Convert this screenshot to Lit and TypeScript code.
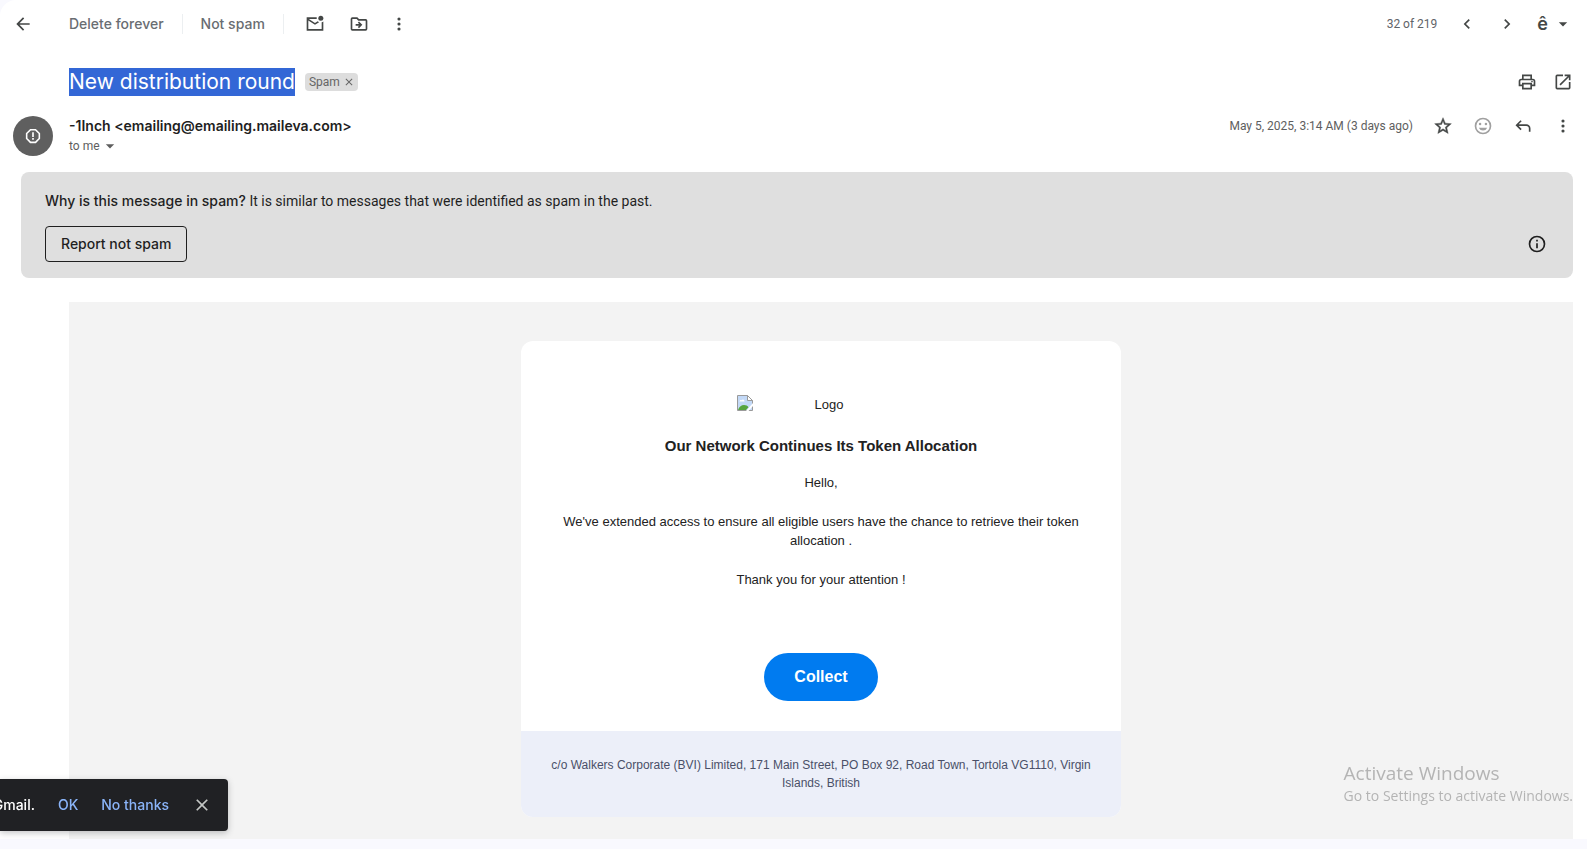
import { LitElement, html, css, svg } from "lit";
import { customElement, property } from "lit/decorators.js";

const ICONS = {
  back: svg`<path d="M20 11H7.83l5.59-5.59L12 4l-8 8 8 8 1.41-1.41L7.83 13H20z"/>`,
  unread: svg`<path d="M22 9v11H2V4h12.1a5 5 0 0 0 0 2H4.6l7.4 4.8 3.2-2.1 1.7 1.1L12 13 4 7.9V18h16V9.9A5 5 0 0 0 22 9z"/><circle cx="19" cy="5" r="3"/>`,
  move: svg`<path d="M20 6h-8l-2-2H4a2 2 0 0 0-2 2v12a2 2 0 0 0 2 2h16a2 2 0 0 0 2-2V8a2 2 0 0 0-2-2zm0 12H4V6h5.17l2 2H20zM12.16 12H8v2h4.16l-1.59 1.59L12 17l4-4-4-4-1.42 1.41z"/>`,
  more: svg`<circle cx="12" cy="6" r="1.900"/><circle cx="12" cy="12" r="1.900"/><circle cx="12" cy="18" r="1.900"/>`,
  prev: svg`<path d="M15.4 7.4 14 6l-6 6 6 6 1.4-1.4-4.6-4.6z"/>`,
  next: svg`<path d="M10 6 8.6 7.4l4.6 4.6-4.6 4.6L10 18l6-6z"/>`,
  print: svg`<path d="M19 8h-1V3H6v5H5a3 3 0 0 0-3 3v6h4v4h12v-4h4v-6a3 3 0 0 0-3-3zM8 5h8v3H8zm8 14H8v-4h8zm2-4v-2H6v2H4v-4a1 1 0 0 1 1-1h14a1 1 0 0 1 1 1v4z"/><circle cx="18" cy="11.5" r="1"/>`,
  open: svg`<path d="M19 19H5V5h7V3H5a2 2 0 0 0-2 2v14a2 2 0 0 0 2 2h14a2 2 0 0 0 2-2v-7h-2zM14 3v2h3.59l-9.83 9.83 1.41 1.41L19 6.41V10h2V3z"/>`,
  star: svg`<path d="m22 9.24-7.19-.62L12 2 9.19 8.63 2 9.24l5.46 4.73L5.82 21 12 17.27 18.18 21l-1.63-7.03zM12 15.4l-3.76 2.27 1-4.28-3.32-2.88 4.38-.38L12 6.1l1.71 4.04 4.38.38-3.32 2.88 1 4.28z" stroke="currentColor" stroke-width=".5"/>`,
  smile: svg`<path fill-rule="evenodd" d="M12 2a10 10 0 1 0 0 20 10 10 0 0 0 0-20zm0 18a8 8 0 1 1 0-16 8 8 0 0 1 0 16z"/><circle cx="8.5" cy="9.5" r="1.5"/><circle cx="15.5" cy="9.5" r="1.5"/><path d="M12 17.5a5.5 5.5 0 0 0 5-3.5H7a5.5 5.5 0 0 0 5 3.5z"/>`,
  reply: svg`<path d="M19 19v-4a3 3 0 0 0-3-3H6.83l3.58 3.59L9 17l-6-6 6-6 1.41 1.41L6.83 10H16a5 5 0 0 1 5 5v4z"/>`,
  caret: svg`<path d="m7 10 5 5 5-5z"/>`,
  info: svg`<path fill-rule="evenodd" d="M12 2a10 10 0 1 0 0 20 10 10 0 0 0 0-20zm0 18a8 8 0 1 1 0-16 8 8 0 0 1 0 16zM11 11h2v6h-2zM11 7h2v2h-2z"/>`,
  close: svg`<path d="M19 6.41 17.59 5 12 10.59 6.41 5 5 6.41 10.59 12 5 17.59 6.41 19 12 13.41 17.59 19 19 17.59 13.41 12z"/>`,
  alert: svg`<path fill-rule="evenodd" d="M8.2 2.5h7.6l5.7 5.7v7.6l-5.7 5.7H8.2l-5.7-5.7V8.2zm.9 2.1L4.6 9.1v5.8l4.5 4.5h5.8l4.5-4.5V9.1l-4.5-4.5zM10.9 7h2.2v6.2h-2.2zM10.9 14.8h2.2V17h-2.2z"/>`,
};

@customElement("glyph-icon")
class GlyphIcon extends LitElement {
  @property() name: keyof typeof ICONS = "back";
  @property({ type: Number }) size = 20;
  static styles = css`
    :host { display: inline-flex; flex: none; }
    svg { fill: currentColor; display: block; }
  `;
  render() {
    return html`<svg width=${this.size} height=${this.size} viewBox="0 0 24 24" aria-hidden="true">${ICONS[this.name]}</svg>`;
  }
}

@customElement("mail-toolbar")
class MailToolbar extends LitElement {
  static styles = css`
    :host { display: flex; align-items: center; height: 48px; padding: 0 14px 0 13px; color: #444746; font-family: Inter, Roboto, sans-serif; }
    button { all: unset; box-sizing: border-box; cursor: pointer; display: inline-flex; align-items: center; justify-content: center; }
    .icon { width: 20px; height: 20px; }
    .text { font: 500 14px/20px Inter, Roboto, sans-serif; color: #696d72; }
    .back { margin-right: 36px; }
    .rule { width: 1px; height: 20px; background: #eceff1; margin: 0 18px; }
    .tools { display: flex; gap: 24px; margin-left: 3px; }
    .tools .last { margin-left: -4px; }
    .pager { display: flex; align-items: center; gap: 20px; margin-left: auto; }
    .count { font: 12px/16px Roboto, sans-serif; color: #5f6368; }
    .input-tool { gap: 5px; }
    .lang { font: 600 18px/20px Inter, sans-serif; }
  `;
  render() {
    return html`
      <button class="icon back" aria-label="Back to Spam"><glyph-icon name="back"></glyph-icon></button>
      <button class="text">Delete forever</button>
      <span class="rule"></span>
      <button class="text">Not spam</button>
      <span class="rule"></span>
      <div class="tools">
        <button class="icon" aria-label="Mark as unread"><glyph-icon name="unread"></glyph-icon></button>
        <button class="icon" aria-label="Move to"><glyph-icon name="move"></glyph-icon></button>
        <button class="icon last" aria-label="More"><glyph-icon name="more"></glyph-icon></button>
      </div>
      <div class="pager">
        <span class="count">32 of 219</span>
        <button class="icon" aria-label="Newer"><glyph-icon name="prev"></glyph-icon></button>
        <button class="icon" aria-label="Older"><glyph-icon name="next"></glyph-icon></button>
        <button class="input-tool" aria-label="Select input tool"><span class="lang">ê</span><glyph-icon name="caret"></glyph-icon></button>
      </div>
    `;
  }
}

@customElement("message-header")
class MessageHeader extends LitElement {
  static styles = css`
    :host { display: block; padding: 0 14px 0 13px; font-family: Inter, Roboto, sans-serif; color: #444746; }
    button { all: unset; box-sizing: border-box; cursor: pointer; display: inline-flex; align-items: center; justify-content: center; }
    .subject { display: flex; align-items: center; padding: 20px 0 0 56px; height: 28px; }
    h1 { margin: 0; font-size: 21px; line-height: 28px; font-weight: 400; color: #fff; background: #3367d6; }
    .chip { display: inline-flex; align-items: center; gap: 3px; height: 18px; margin-left: 10px; padding: 0 3px 0 4px; border-radius: 4px; background: #ddd; color: #666; font: 12px/18px Roboto, sans-serif; }
    .actions { display: flex; margin-left: auto; gap: 16px; }
    .sender { display: flex; align-items: flex-start; padding-top: 20px; }
    .avatar { width: 40px; height: 40px; border-radius: 50%; background: #5f5f5f; color: #fff; display: flex; align-items: center; justify-content: center; margin-right: 16px; }
    .who { display: flex; flex-direction: column; }
    .name { font-size: 14px; line-height: 20px; font-weight: 600; color: #1f1f1f; }
    .to { justify-content: flex-start; font: 12px/20px Roboto, sans-serif; color: #5e5e5e; }
    .meta { display: flex; align-items: center; margin-left: auto; gap: 20px; height: 20px; }
    .date { font: 12px/20px Roboto, sans-serif; color: #5e5e5e; }
    .muted { color: #a0a0a0; }
  `;
  render() {
    return html`
      <div class="subject">
        <h1>New distribution round</h1>
        <span class="chip">Spam <button aria-label="Remove label Spam"><glyph-icon name="close" size="12"></glyph-icon></button></span>
        <div class="actions">
          <button aria-label="Print all"><glyph-icon name="print"></glyph-icon></button>
          <button aria-label="In new window"><glyph-icon name="open"></glyph-icon></button>
        </div>
      </div>
      <div class="sender">
        <div class="avatar"><glyph-icon name="alert" size="18"></glyph-icon></div>
        <div class="who">
          <span class="name">-1Inch &lt;emailing@emailing.maileva.com&gt;</span>
          <button class="to">to me <glyph-icon name="caret"></glyph-icon></button>
        </div>
        <div class="meta">
          <span class="date">May 5, 2025, 3:14 AM (3 days ago)</span>
          <button aria-label="Star"><glyph-icon name="star"></glyph-icon></button>
          <button class="muted" aria-label="Add reaction"><glyph-icon name="smile"></glyph-icon></button>
          <button aria-label="Reply"><glyph-icon name="reply"></glyph-icon></button>
          <button aria-label="More"><glyph-icon name="more"></glyph-icon></button>
        </div>
      </div>
    `;
  }
}

@customElement("spam-banner")
class SpamBanner extends LitElement {
  static styles = css`
    :host { display: block; margin: 16px 14px 0 21px; padding: 19px 26px 16px 24px; border-radius: 8px; background: #dfdfdf; color: #1f1f1f; font: 14px/20px Roboto, sans-serif; }
    p { margin: 0 0 15px; }
    strong { font-family: Inter, Roboto, sans-serif; font-weight: 500; }
    .row { display: flex; align-items: center; justify-content: space-between; }
    button { all: unset; box-sizing: border-box; cursor: pointer; display: inline-flex; }
    .report { height: 36px; align-items: center; padding: 0 15px; border: 1px solid #1f1f1f; border-radius: 4px; font-family: Inter, Roboto, sans-serif; font-weight: 500; }
  `;
  render() {
    return html`
      <p><strong>Why is this message in spam?</strong> It is similar to messages that were identified as spam in the past.</p>
      <div class="row">
        <button class="report">Report not spam</button>
        <button aria-label="Learn more"><glyph-icon name="info"></glyph-icon></button>
      </div>
    `;
  }
}

@customElement("mail-body")
class MailBody extends LitElement {
  static styles = css`
    :host { display: block; flex: 1; margin: 24px 14px 0 69px; padding: 39px 0 21px; background: #f3f3f3; font-family: "Liberation Sans", Arial, sans-serif; text-align: center; color: #222; }
    .card { max-width: 600px; margin: 0 auto; border-radius: 12px; overflow: hidden; background: #fff; }
    .main { padding: 54px 40px 30px; }
    .logo { display: flex; width: 168px; margin: 0 auto; font-size: 13px; line-height: 20px; }
    .logo span { flex: 1; }
    h2 { margin: 19px 0 15px; font-size: 15px; line-height: 24px; }
    p { margin: 0 0 20px; font-size: 13px; line-height: 19px; }
    .collect { display: inline-block; margin-top: 44px; padding: 14px 30px; border-radius: 24px; background: #007bf0; color: #fff; font-size: 16px; line-height: 20px; font-weight: 700; text-decoration: none; }
    .foot { padding: 25px 30px 25px; background: #eceff9; color: #4a5068; font-size: 12px; line-height: 18px; }
  `;
  render() {
    return html`
      <div class="card">
        <div class="main">
          <div class="logo">
            <svg width="16" height="16" viewBox="0 0 16 16" aria-hidden="true">
              <path d="M.5.5h10l5 5v10H.5z" fill="#c3d9f7" stroke="#9a9a9a"/>
              <path d="M10.5.5v5h5z" fill="#fff" stroke="#9a9a9a"/>
              <path d="M2.5 6.5c0-1.6 1.6-2 2.2-1.2.8-1.6 3-.9 2.8 1.2z" fill="#fff"/>
              <path d="M1 15c1-3.4 3.600-5 6-5 2 0 3.500.8 4.500 2.200L9 15z" fill="#57a53f"/>
              <path d="M9 16l7-8v3l-4.500 5z" fill="#fff"/>
            </svg>
            <span>Logo</span>
          </div>
          <h2>Our Network Continues Its Token Allocation</h2>
          <p>Hello,</p>
          <p>We've extended access to ensure all eligible users have the chance to retrieve their token allocation .</p>
          <p>Thank you for your attention !</p>
          <a class="collect" href="#collect">Collect</a>
        </div>
        <div class="foot">c/o Walkers Corporate (BVI) Limited, 171 Main Street, PO Box 92, Road Town, Tortola VG1110, Virgin Islands, British</div>
      </div>
    `;
  }
}

@customElement("snack-bar")
class SnackBar extends LitElement {
  static styles = css`
    :host { position: fixed; left: 0; bottom: 18px; width: 228px; height: 52px; box-sizing: border-box; padding-right: 16px; display: flex; align-items: center; justify-content: flex-end; gap: 23px; overflow: hidden; border-radius: 0 4px 4px 0; background: #202124; color: #fff; font: 500 14px/20px Inter, Roboto, sans-serif; box-shadow: 0 2px 6px rgba(60, 64, 67, 0.3); }
    button { all: unset; cursor: pointer; display: inline-flex; flex: none; color: #8ab4f8; }
    .dismiss { color: #c4c7c5; }
  `;
  render() {
    return html`
      <span>Gmail.</span>
      <button>OK</button>
      <button>No thanks</button>
      <button class="dismiss" aria-label="Dismiss"><glyph-icon name="close"></glyph-icon></button>
    `;
  }
}

@customElement("app-root")
class AppRoot extends LitElement {
  static styles = css`
    :host { display: flex; flex-direction: column; min-height: 100vh; box-sizing: border-box; padding-bottom: 10px; background: #f9f9fe; }
    .thread { display: flex; flex-direction: column; flex: 1; background: #fff; border-top-left-radius: 16px; }
    .watermark { position: fixed; right: 14px; bottom: 43px; color: #b4b4b4; font: 14px/20px "Open Sans", sans-serif; pointer-events: none; }
    .watermark strong { display: block; font-size: 19px; line-height: 26px; font-weight: 400; }
  `;
  render() {
    return html`
      <main class="thread">
        <mail-toolbar></mail-toolbar>
        <message-header></message-header>
        <spam-banner></spam-banner>
        <mail-body></mail-body>
      </main>
      <snack-bar></snack-bar>
      <div class="watermark"><strong>Activate Windows</strong>Go to Settings to activate Windows.</div>
    `;
  }
}
